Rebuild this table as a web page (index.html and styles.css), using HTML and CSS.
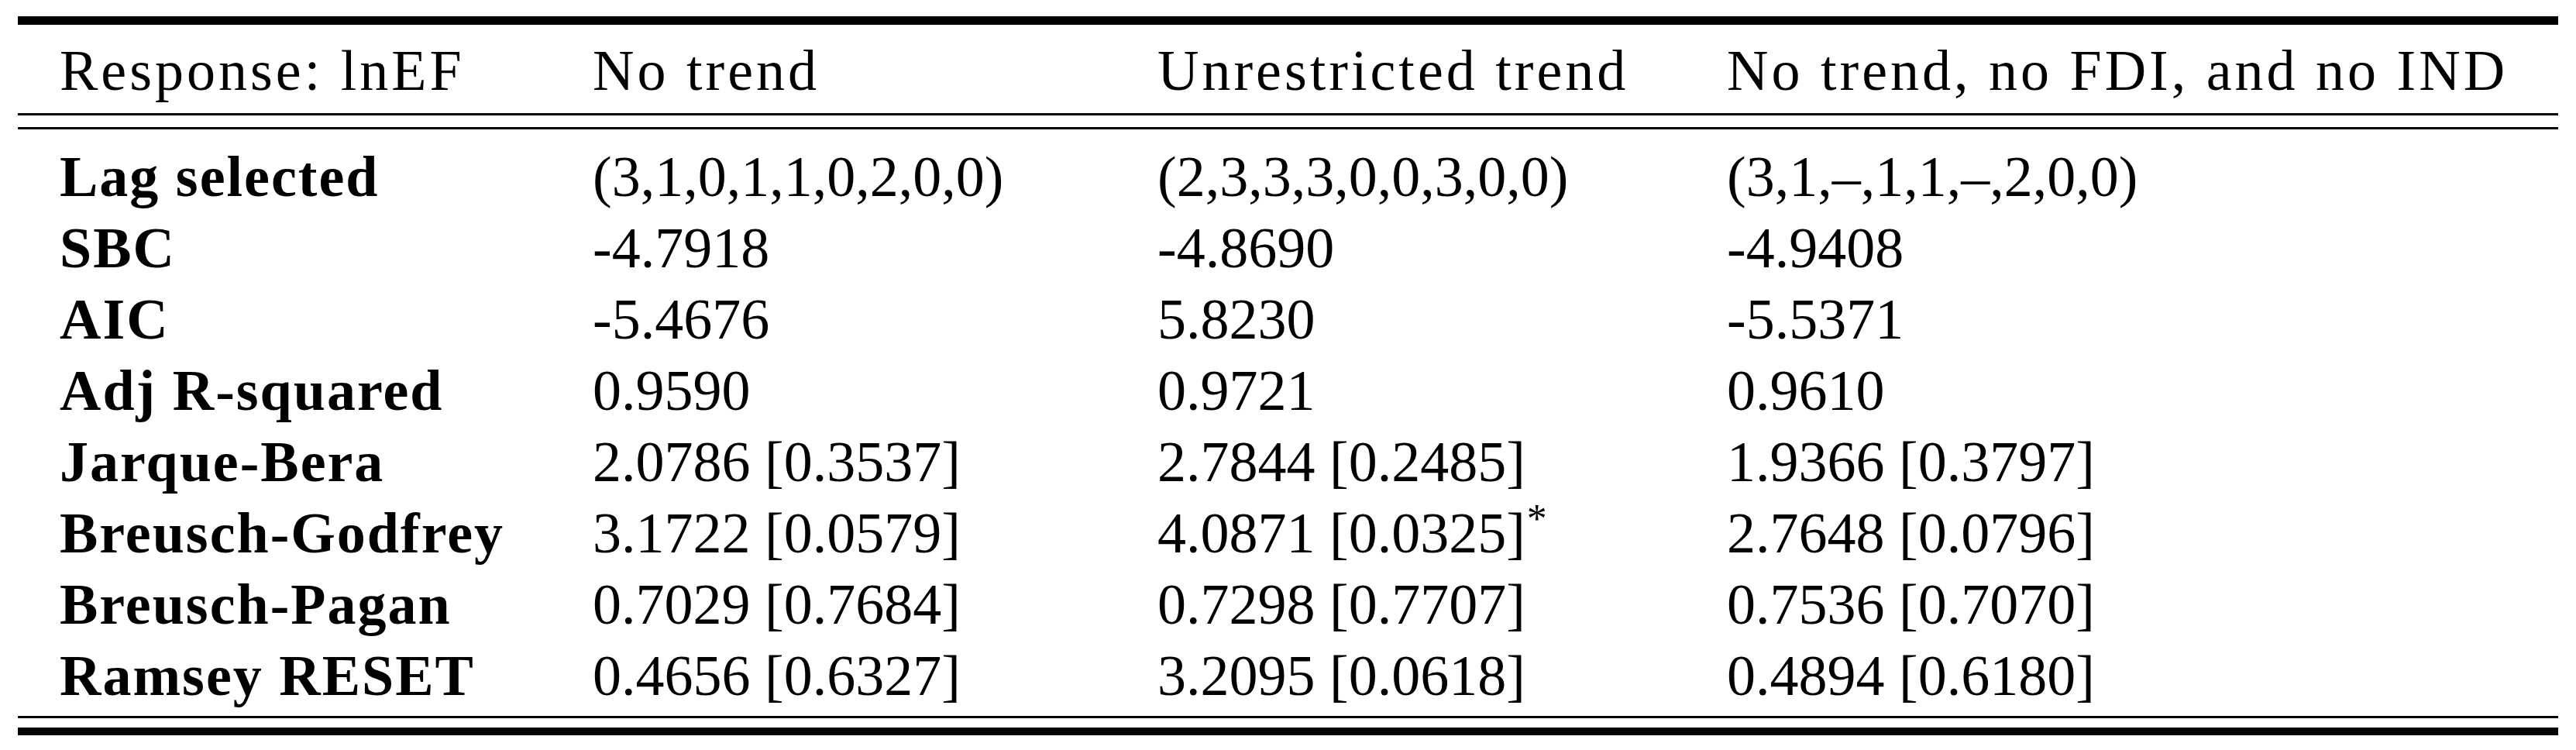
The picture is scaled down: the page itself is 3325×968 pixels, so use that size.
FILE: index.html
```html
<!DOCTYPE html>
<html lang="en">
<head>
    <meta charset="UTF-8">
    <title>ARDL diagnostics: lnEF</title>
    <link rel="stylesheet" href="styles.css">
</head>
<body>

<div class="table">
    <!-- header -->
    <div class="row head">
        <div class="cell">Response: lnEF</div>
        <div class="cell">No trend</div>
        <div class="cell">Unrestricted trend</div>
        <div class="cell">No trend, no FDI, and no IND</div>
    </div>

    <div class="body">
        <div class="row">
            <div class="cell label">Lag selected</div>
            <div class="cell">(3,1,0,1,1,0,2,0,0)</div>
            <div class="cell">(2,3,3,3,0,0,3,0,0)</div>
            <div class="cell">(3,1,–,1,1,–,2,0,0)</div>
        </div>
        <div class="row">
            <div class="cell label">SBC</div>
            <div class="cell">-4.7918</div>
            <div class="cell">-4.8690</div>
            <div class="cell">-4.9408</div>
        </div>
        <div class="row">
            <div class="cell label">AIC</div>
            <div class="cell">-5.4676</div>
            <div class="cell">5.8230</div>
            <div class="cell">-5.5371</div>
        </div>
        <div class="row">
            <div class="cell label">Adj R-squared</div>
            <div class="cell">0.9590</div>
            <div class="cell">0.9721</div>
            <div class="cell">0.9610</div>
        </div>
        <div class="row">
            <div class="cell label">Jarque-Bera</div>
            <div class="cell">2.0786 [0.3537]</div>
            <div class="cell">2.7844 [0.2485]</div>
            <div class="cell">1.9366 [0.3797]</div>
        </div>
        <div class="row">
            <div class="cell label">Breusch-Godfrey</div>
            <div class="cell">3.1722 [0.0579]</div>
            <div class="cell">4.0871 [0.0325]<sup class="star">*</sup></div>
            <div class="cell">2.7648 [0.0796]</div>
        </div>
        <div class="row">
            <div class="cell label">Breusch-Pagan</div>
            <div class="cell">0.7029 [0.7684]</div>
            <div class="cell">0.7298 [0.7707]</div>
            <div class="cell">0.7536 [0.7070]</div>
        </div>
        <div class="row">
            <div class="cell label">Ramsey RESET</div>
            <div class="cell">0.4656 [0.6327]</div>
            <div class="cell">3.2095 [0.0618]</div>
            <div class="cell">0.4894 [0.6180]</div>
        </div>
    </div>
</div>

</body>
</html>
```

FILE: styles.css
```css
body {
    margin: 0;
    padding: 0;
    background: #fff;
    color: #000;
    font-family: "Liberation Serif", "Times New Roman", serif;
    font-size: 74px;
}

.table {
    width: 3279px;
    margin: 21px 0 0 23px;
    border-top: 11px solid #000;
    border-bottom: 10px solid #000;
}

.row {
    display: grid;
    grid-template-columns: 688px 729px 735px 1fr;
    padding-left: 54px;
    line-height: 92px;
    white-space: nowrap;
}

.head {
    padding-top: 13px;
    padding-bottom: 9px;
    border-bottom: 3px solid #000;
    letter-spacing: 4px;
}

.body {
    margin-top: 15px;
    margin-bottom: 12px;
    padding: 15px 0 6px;
    border-top: 3px solid #000;
    border-bottom: 3px solid #000;
}

.label {
    font-weight: bold;
    letter-spacing: 2px;
}

.star {
    font-size: 70%;
    line-height: 0;
    vertical-align: 0.5em;
    margin-left: 2px;
}
```
